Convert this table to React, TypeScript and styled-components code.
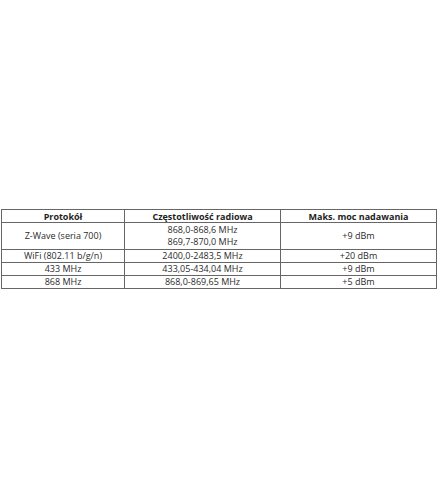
import React from "react";
import styled, { createGlobalStyle } from "styled-components";

const Global = createGlobalStyle`
  html, body { margin: 0; padding: 0; background: #fff; }
  body { font-family: "Open Sans", "DejaVu Sans", sans-serif; }
`;

const Page = styled.div`
  padding: 209px 1px 0 1px;
`;

const Table = styled.table`
  width: 435px;
  border-collapse: collapse;
  table-layout: fixed;
  font-size: 9px;
  color: #2b2b2b;
`;

const Row = styled.tr<{ $h: number }>`
  height: ${(p) => p.$h}px;
`;

const Th = styled.th`
  border: 1px solid #666;
  padding: 0;
  font-weight: 700;
  line-height: 11px;
  text-align: center;
  color: #1e1e1e;
`;

const Td = styled.td`
  border: 1px solid #666;
  padding: 0;
  line-height: 12px;
  text-align: center;
  vertical-align: middle;
`;

const rows = [
  { p: "WiFi (802.11 b/g/n)", f: "2400,0-2483,5 MHz", m: "+20 dBm", h: 11 },
  { p: "433 MHz", f: "433,05-434,04 MHz", m: "+9 dBm", h: 12 },
  { p: "868 MHz", f: "868,0-869,65 MHz", m: "+5 dBm", h: 11 },
];

export default function App() {
  return (
    <>
      <Global />
      <Page>
        <Table>
          <colgroup>
            <col style={{ width: 123 }} />
            <col style={{ width: 156 }} />
            <col style={{ width: 156 }} />
          </colgroup>
          <thead>
            <Row $h={13}>
              <Th>Protokół</Th>
              <Th>Częstotliwość radiowa</Th>
              <Th>Maks. moc nadawania</Th>
            </Row>
          </thead>
          <tbody>
            <Row $h={27}>
              <Td>Z-Wave (seria 700)</Td>
              <Td>
                868,0-868,6 MHz
                <br />
                869,7-870,0 MHz
              </Td>
              <Td>+9 dBm</Td>
            </Row>
            {rows.map((r) => (
              <Row key={r.p} $h={r.h}>
                <Td>{r.p}</Td>
                <Td>{r.f}</Td>
                <Td>{r.m}</Td>
              </Row>
            ))}
          </tbody>
        </Table>
      </Page>
    </>
  );
}
